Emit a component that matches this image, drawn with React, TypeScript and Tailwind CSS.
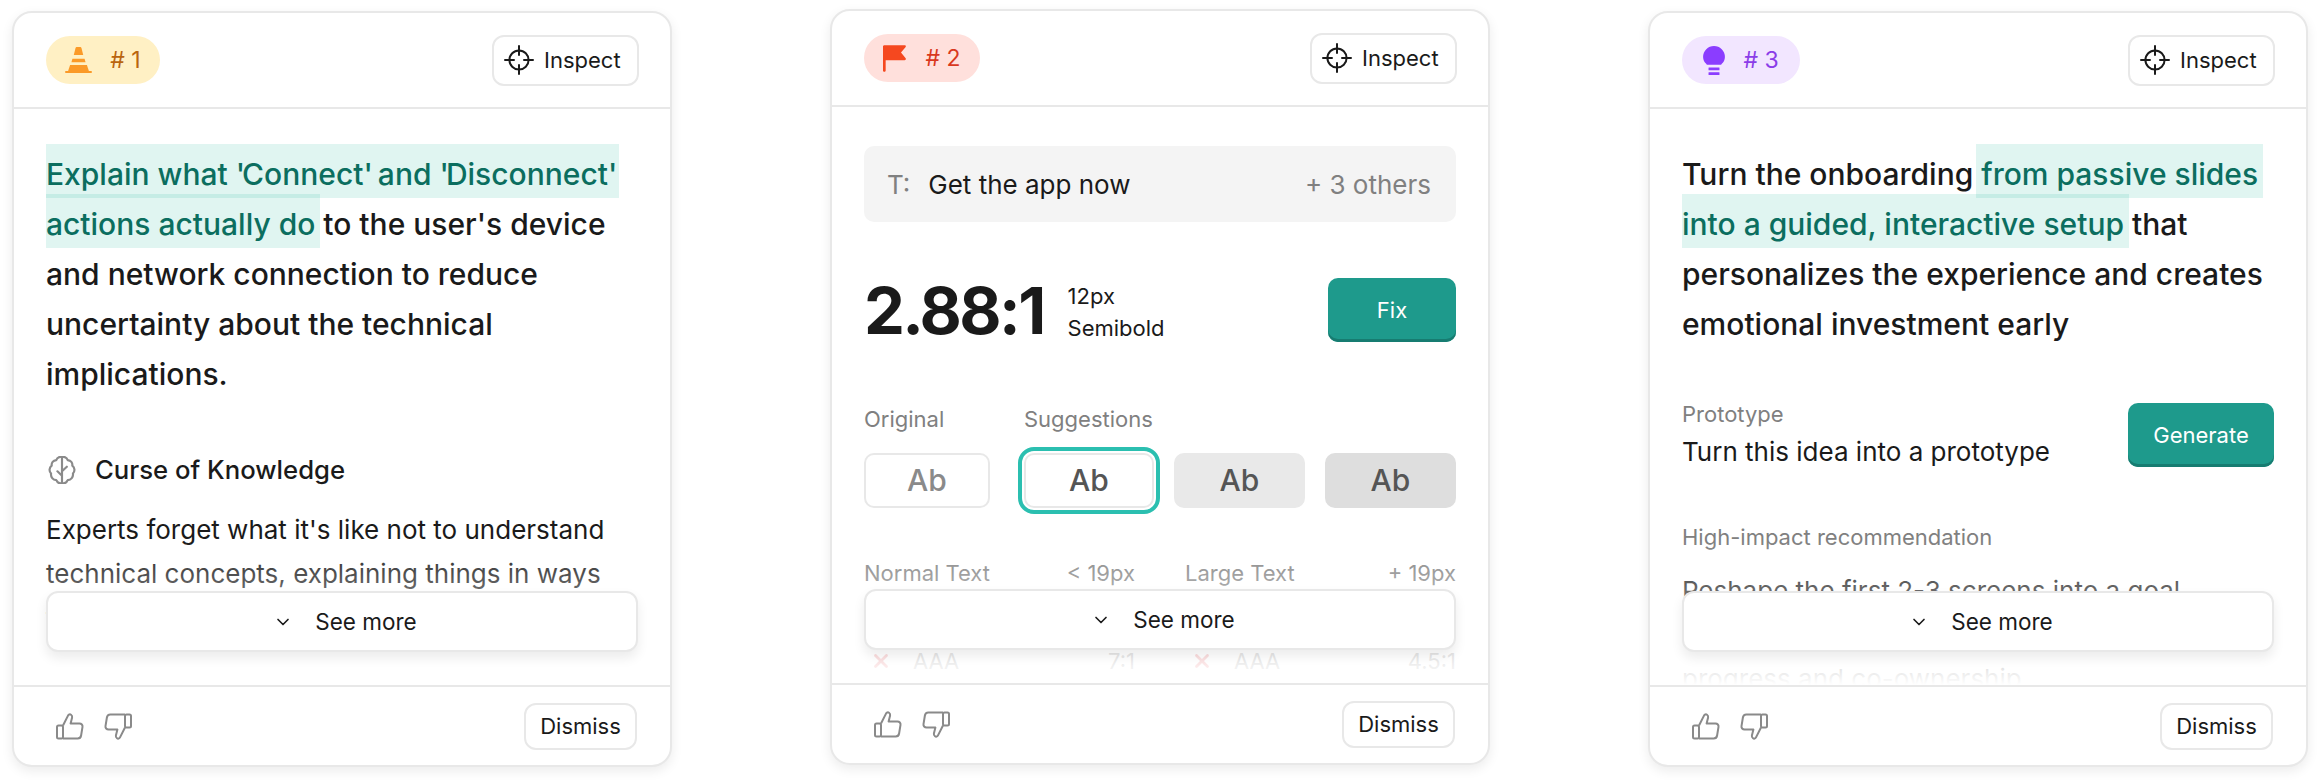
import type { ReactNode } from "react";
import { ChevronDown, X } from "lucide-react";

const CrosshairIcon = () => (
  <svg width="30" height="30" viewBox="0 0 30 30" fill="none" stroke="#1a1a1a" strokeWidth="2" strokeLinecap="round">
    <circle cx="15" cy="15" r="9.6" />
    <path d="M15 1v9M15 20v9M1 15h9M20 15h9" />
  </svg>
);

const ThumbIcon = ({ down }: { down?: boolean }) => (
  <svg width="28" height="27" viewBox="0 0 28 27" fill="none" stroke="#8a8a8a" strokeWidth="2" strokeLinejoin="round" className={down ? "rotate-180" : ""}>
    <rect x="1" y="12.5" width="6" height="13" rx="1.5" />
    <path d="M7 12.5 12 2.6c.6-1.2 2-1.6 3-.9 1 .7 1.4 1.7 1.1 2.9L14.6 10.5h8.9c1.9 0 3.3 1.6 3 3.4l-1.4 8.6c-.3 1.8-1.7 3-3.4 3H7" />
  </svg>
);

const BrainIcon = () => (
  <svg width="28" height="28" viewBox="1 1 22 22" fill="none" stroke="#8a8a8a" strokeWidth="1.700" strokeLinecap="round" strokeLinejoin="round">
    <path d="M12 1.500C9.500 1.500 8 2.700 7.500 4.200 5 4.500 3.600 6.300 3.900 8.600 2 10 1.600 13 3.400 14.800 3 17.500 4.900 19.800 7.500 20 8.200 21.600 10 22.800 12 22.300 14 22.800 15.800 21.600 16.500 20 19.100 19.800 21 17.500 20.600 14.800 22.400 13 22 10 20.100 8.600 20.400 6.300 19 4.500 16.500 4.200 16 2.700 14.500 1.500 12 1.500Z" />
    <path d="M12 1.500v20.800M12 13l3.800-3.600M12 16.500 8.400 13" />
  </svg>
);

const ConeIcon = () => (
  <svg width="27" height="26" viewBox="0 0 80 77" fill="#fb9a28">
    <path d="M26 24 31 4c.5-2.400 2-4 5-4h8c3 0 4.500 1.600 5 4l5 20Z" />
    <path d="M22 35h36l3 10H19Z" />
    <path d="M15 53h50l6 19H9Z" />
    <rect x="0" y="71" width="80" height="6" rx="3" />
  </svg>
);

const FlagIcon = () => (
  <svg width="23" height="27" viewBox="0 0 69 80" fill="#f5481f">
    <path d="M0 4C0 1.800 1.800 0 4 0h61c3 0 4.500 3 3 5.500L54 22l14 17.500c1.500 2.500 0 5.500-3 5.500H8v31c0 2.200-1.800 4-4 4s-4-1.800-4-4Z" />
  </svg>
);

const BulbIcon = () => (
  <svg width="22" height="29" viewBox="0 0 64 85" fill="#8b3dff">
    <path d="M0 32a32 32 0 0 1 64 0c0 9-4 15-9 20-1 1-2 3-3 3H12c-1 0-2-2-3-3-5-5-9-11-9-20Z" />
    <rect x="16" y="63" width="32" height="8" rx="1" />
    <rect x="16" y="77" width="32" height="8" rx="1" />
  </svg>
);

const Highlight = ({ children }: { children: ReactNode }) => (
  <span className="bg-[rgba(48,188,162,0.15)] text-[#0b6e5f] px-[5px] -mx-[5px] pt-3 pb-[6px] [box-decoration-break:clone]">
    {children}
  </span>
);

// the straight quote is narrower in the reference than in the installed Inter
const Quote = () => <span className="tracking-[-3px]">'</span>;

const TealButton = ({ children, className }: { children: ReactNode; className: string }) => (
  <button className={`h-16 rounded-[10px] bg-[#1e9a8c] text-white text-[22px] shadow-[inset_0_-3px_0_#177c71] ${className}`}>
    {children}
  </button>
);

type CardProps = {
  badgeClass: string;
  badgeText: string;
  icon: ReactNode;
  className?: string;
  gap: string;
  badgeWidth: string;
  children: ReactNode;
};

const Card = ({ badgeClass, badgeText, icon, className, gap, badgeWidth, children }: CardProps) => (
  <div className={`w-[660px] h-[756px] flex flex-col shrink-0 rounded-[20px] border-2 border-[#e8e8e8] bg-white shadow-[0_4px_12px_rgba(0,0,0,0.08)] overflow-hidden ${className ?? ""}`}>
    <div className="h-[96px] shrink-0 border-b-2 border-[#e8e8e8] pl-8 pr-[31px] flex items-center justify-between">
      <div className={`h-12 rounded-full flex items-center justify-center text-[23px] ${gap} ${badgeWidth} ${badgeClass}`}>
        {icon}
        <span>{badgeText}</span>
      </div>
      <button className="h-[51px] w-[147px] rounded-xl border-2 border-[#e8e8e8] flex items-center gap-[10px] pl-[10px] text-[22px] text-[#1a1a1a]">
        <CrosshairIcon />
        Inspect
      </button>
    </div>

    <div className="relative flex-1 overflow-hidden px-8">
      {children}
      <div className="absolute inset-x-0 bottom-0 h-[145px] bg-gradient-to-b from-white/0 to-white" />
      <button className="absolute left-8 right-8 bottom-[33px] h-[61px] rounded-xl border-2 border-[#e8e8e8] bg-white shadow-[0_6px_12px_rgba(0,0,0,0.08)] flex items-center justify-center gap-[22px] pl-[6px] text-[22.5px] text-[#1a1a1a]">
        <ChevronDown size={20} strokeWidth={2} />
        See more
      </button>
    </div>

    <div className="h-20 shrink-0 border-t-2 border-[#e8e8e8] pl-[42px] pr-[33px] flex items-center justify-between">
      <div className="flex items-center gap-5">
        <ThumbIcon />
        <ThumbIcon down />
      </div>
      <button className="h-[47px] w-[113px] rounded-xl border-2 border-[#e8e8e8] text-[22px] text-[#1a1a1a]">
        Dismiss
      </button>
    </div>
  </div>
);

const AbBox = ({ className }: { className: string }) => (
  <div className={`h-[55px] rounded-[10px] border-2 flex items-center justify-center text-[30px] font-medium ${className}`}>
    Ab
  </div>
);

const RatingRow = ({ level, ratio }: { level: string; ratio: string }) => (
  <div className="flex items-center h-11">
    <X size={22} strokeWidth={3} className="text-[#e5484d] ml-[6px] mr-[21px]" />
    <span className="flex-1">{level}</span>
    <span>{ratio}</span>
  </div>
);

export default function App() {
  return (
    <div className="min-h-screen bg-white flex items-start gap-[158px] pl-3 pt-[11px] font-['Inter',sans-serif] text-[#1a1a1a]">
      <Card
        badgeClass="bg-[#fff0c4] text-[#b9650f]"
        badgeText="# 1"
        icon={<ConeIcon />}
        gap="gap-[18px]"
        badgeWidth="w-[114px]"
      >
        <p className="mt-10 text-[30px] leading-[50px] font-medium overflow-x-clip">
          <Highlight>
            Explain what <Quote />Connect<Quote /> and <Quote />Disconnect<Quote /> actions actually do
          </Highlight>{" "}
          to the user's device and network connection to reduce uncertainty about the technical implications.
        </p>
        <div className="mt-[57px] flex items-center gap-[19px] h-7 pl-[2px]">
          <BrainIcon />
          <span className="text-[25.700px] font-medium">Curse of Knowledge</span>
        </div>
        <p className="mt-6 text-[26px] leading-[44px]">
          Experts forget what it's like not to understand technical concepts, explaining things in ways that leave users unsure about what will happen.
        </p>
      </Card>

      <Card
        className="-mt-[2px]"
        badgeClass="bg-[#ffe0dc] text-[#d9381e]"
        badgeText="# 2"
        icon={<FlagIcon />}
        gap="gap-[19px]"
        badgeWidth="w-[116px]"
      >
        <div className="mt-[39px] h-[76px] rounded-[10px] bg-[#f4f4f4] flex items-center pl-[23px] pr-[25px] text-[26px]">
          <span className="text-[#808080] mr-[18px]">T:</span>
          <span className="flex-1">Get the app now</span>
          <span className="text-[#808080]">+ 3 others</span>
        </div>

        <div className="mt-14 h-16 flex items-center">
          <span className="text-[65px] font-bold leading-none tracking-[-2.600px]">2.88:1</span>
          <div className="ml-6 mt-[3px] text-[22px] leading-8">
            <div>12px</div>
            <div>Semibold</div>
          </div>
          <TealButton className="ml-auto w-32">Fix</TealButton>
        </div>

        <div className="mt-[63px] flex text-[22px] leading-7 text-[#808080]">
          <span className="w-40">Original</span>
          <span>Suggestions</span>
        </div>

        <div className="mt-5 flex">
          <AbBox className="w-[126px] border-[#e8e8e8] bg-white text-[#8a8a8a]" />
          <AbBox className="w-[130px] ml-[34px] border-[#e8e8e8] bg-white text-[#555] outline-[4px] outline-offset-[2px] outline-[#2bbfb0]" />
          <AbBox className="w-[131px] ml-5 border-[#e9e9e9] bg-[#e9e9e9] text-[#555]" />
          <AbBox className="w-[131px] ml-5 border-[#dedede] bg-[#dedede] text-[#555]" />
        </div>

        <div className="mt-[51px] grid grid-cols-2 gap-x-[50px] text-[22px] text-[#808080]">
          <div className="flex justify-between h-7 leading-7">
            <span>Normal Text</span>
            <span>&lt; 19px</span>
          </div>
          <div className="flex justify-between h-7 leading-7">
            <span>Large Text</span>
            <span>+ 19px</span>
          </div>
          <div className="mt-2">
            <RatingRow level="AA" ratio="4.5:1" />
            <RatingRow level="AAA" ratio="7:1" />
          </div>
          <div className="mt-2">
            <RatingRow level="AA" ratio="3:1" />
            <RatingRow level="AAA" ratio="4.5:1" />
          </div>
        </div>
      </Card>

      <Card
        badgeClass="bg-[#f2e6ff] text-[#8b3de8]"
        badgeText="# 3"
        icon={<BulbIcon />}
        gap="gap-[18px]"
        badgeWidth="w-[118px]"
      >
        <p className="mt-10 text-[30px] leading-[50px] font-medium overflow-x-clip">
          Turn the onboarding <Highlight>from passive slides into a guided, interactive setup</Highlight> that personalizes the experience and creates emotional investment early
        </p>
        <div className="mt-[51px] flex items-center justify-between">
          <div>
            <div className="text-[22px] leading-7 text-[#808080]">Prototype</div>
            <div className="mt-[6px] text-[26px] leading-9">Turn this idea into a prototype</div>
          </div>
          <TealButton className="w-[146px]">Generate</TealButton>
        </div>
        <div className="mt-[53px] text-[22px] leading-7 text-[#808080]">High-impact recommendation</div>
        <p className="mt-[18px] text-[26px] leading-[44px]">
          Reshape the first 2-3 screens into a goal
          <br />
          oriented setup that builds a sense of
          <br />
          progress and co-ownership
        </p>
      </Card>
    </div>
  );
}
